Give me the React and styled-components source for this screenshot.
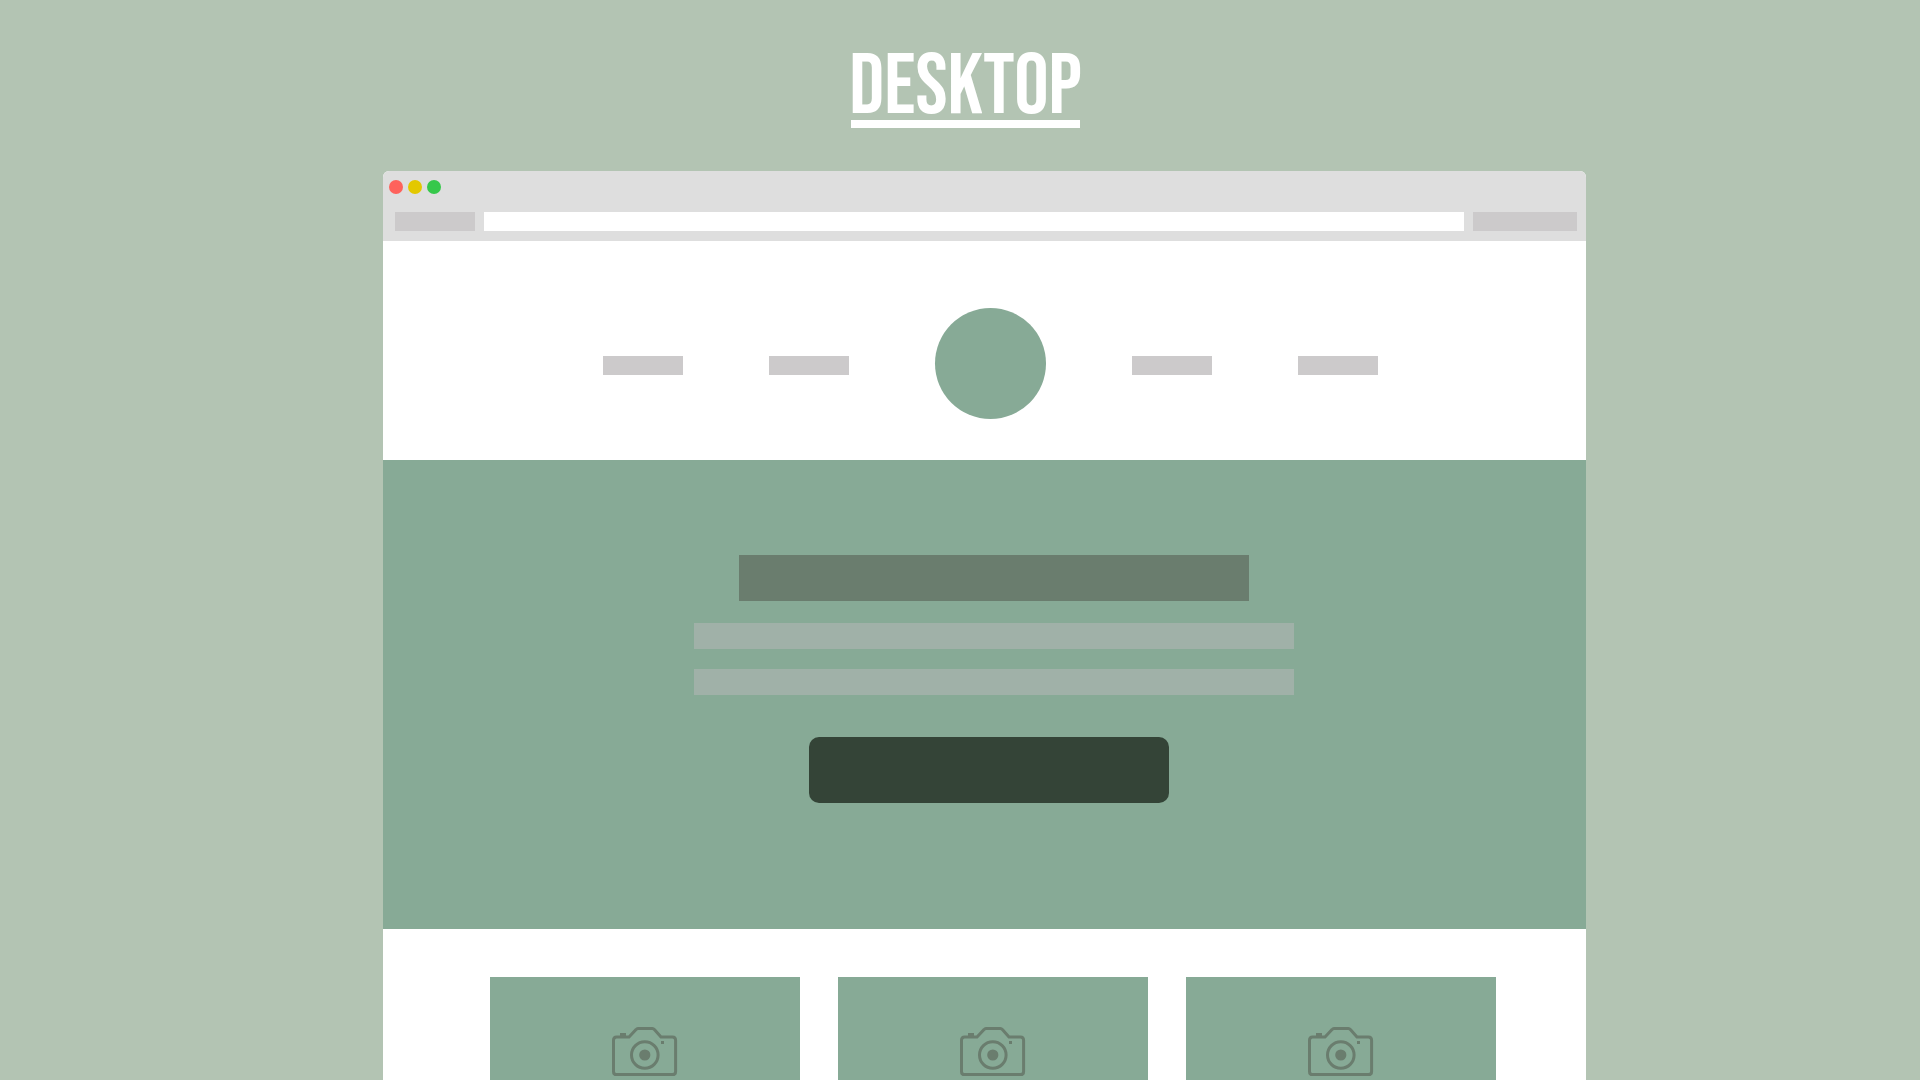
import React from "react";
import styled, { createGlobalStyle, ThemeProvider } from "styled-components";

const theme = {
  backdrop: "#b3c4b3",
  chrome: "#dedede",
  block: "#cccacb",
  sage: "#87aa96",
  moss: "#6a7d6e",
  mist: "#a0b1a8",
  forest: "#344437",
};

const GlobalStyle = createGlobalStyle`
  *, *::before, *::after { box-sizing: border-box; }
  body {
    margin: 0;
    background: ${theme.backdrop};
    font-family: "Bebas Neue", "Oswald", sans-serif;
  }
`;

const Page = styled.div`
  min-height: 100vh;
  display: flex;
  flex-direction: column;
`;

const PageHeader = styled.header`
  display: flex;
  justify-content: center;
  padding: 56px 0 43px 11px;
`;

const Title = styled.h1`
  margin: 0;
  color: #fff;
  font-size: 86px;
  font-weight: 400;
  line-height: 64px;

  &::after {
    content: "";
    display: block;
    height: 8px;
    margin: 0 2px;
    background: #fff;
  }
`;

const BrowserWindow = styled.section`
  flex: 1;
  display: flex;
  flex-direction: column;
  margin: 0 334px 0 383px;
  overflow: hidden;
  background: #fff;
  border-radius: 6px 6px 0 0;
`;

const Chrome = styled.div`
  display: flex;
  flex-direction: column;
  gap: 18px;
  padding-bottom: 10px;
  background: ${(p) => p.theme.chrome};
`;

const WindowControls = styled.div`
  display: flex;
  gap: 5px;
  padding: 9px 6px 0;
`;

const Dot = styled.button`
  width: 14px;
  height: 14px;
  padding: 0;
  border: 0;
  border-radius: 50%;
  background: ${(p) => p.$color};
`;

const Toolbar = styled.div`
  display: flex;
  gap: 9px;
  padding: 0 9px 0 12px;
`;

const ToolGroup = styled.div`
  width: ${(p) => p.$width};
  height: 19px;
  background: ${(p) => p.theme.block};
`;

const Address = styled.input`
  flex: 1;
  min-width: 0;
  height: 19px;
  padding: 0 8px;
  border: 0;
  background: #fff;
`;

const SiteNav = styled.nav`
  display: flex;
  justify-content: center;
  align-items: center;
  gap: 86px;
  padding: 67px 0 41px 11px;
`;

const NavGroup = styled.div`
  display: flex;
  gap: 86px;
  padding-top: 4px;
`;

const NavLink = styled.a`
  display: block;
  width: 80px;
  height: 19px;
  background: ${(p) => p.theme.block};
`;

const Logo = styled.a`
  display: block;
  width: 111px;
  height: 111px;
  border-radius: 50%;
  background: ${(p) => p.theme.sage};
`;

const Hero = styled.section`
  display: flex;
  flex-direction: column;
  align-items: center;
  gap: 42px;
  padding: 95px 0 126px 9px;
  background: ${(p) => p.theme.sage};
`;

const Copy = styled.div`
  display: flex;
  flex-direction: column;
  align-items: center;
  gap: 22px;
  padding-left: 9px;
`;

const Headline = styled.div`
  width: 510px;
  height: 46px;
  background: ${(p) => p.theme.moss};
`;

const Lines = styled.div`
  display: flex;
  flex-direction: column;
  gap: 20px;
`;

const Line = styled.div`
  width: 600px;
  height: 26px;
  background: ${(p) => p.theme.mist};
`;

const Action = styled.button`
  width: 360px;
  height: 66px;
  padding: 0;
  border: 0;
  border-radius: 10px;
  background: ${(p) => p.theme.forest};
`;

const Gallery = styled.section`
  flex: 1;
  display: grid;
  grid-template-columns: repeat(3, 1fr);
  gap: 38px;
  padding: 48px 90px 0 107px;
`;

const Card = styled.article`
  display: flex;
  justify-content: center;
  align-items: flex-start;
  padding-top: 50px;
  background: ${(p) => p.theme.sage};
`;

const CameraDrawing = styled.svg`
  display: block;
  width: 66px;
  height: 50px;
  fill: none;
  stroke: ${(p) => p.theme.moss};
  stroke-width: 3;

  .solid {
    fill: ${(p) => p.theme.moss};
    stroke: none;
  }
`;

function Camera() {
  return (
    <CameraDrawing viewBox="0 0 66 50" aria-hidden="true">
      <path d="M4.6 10H17L24 2.6Q24.8 1.6 26 1.6H40.4Q41.6 1.6 42.4 2.6L49 10H60.4Q63.6 10 63.6 13.2V44.4Q63.6 47.6 60.4 47.6H4.6Q1.5 47.6 1.5 44.4V13.2Q1.5 10 4.6 10Z" />
      <path className="solid" d="M8 6h6v4h-6zM49 14h3v3h-3z" />
      <circle cx="32.8" cy="28" r="13.3" />
      <circle className="solid" cx="32.8" cy="28" r="5.6" />
    </CameraDrawing>
  );
}

const controls = [
  { name: "Close", color: "#fe625c" },
  { name: "Minimise", color: "#e3c800" },
  { name: "Zoom", color: "#36c84b" },
];

export default function App() {
  return (
    <ThemeProvider theme={theme}>
      <GlobalStyle />
      <Page>
        <PageHeader>
          <Title>DESKTOP</Title>
        </PageHeader>
        <BrowserWindow>
          <Chrome>
            <WindowControls>
              {controls.map((c) => (
                <Dot key={c.name} type="button" aria-label={c.name} $color={c.color} />
              ))}
            </WindowControls>
            <Toolbar>
              <ToolGroup $width="80px" />
              <Address type="text" aria-label="Address" />
              <ToolGroup $width="104px" />
            </Toolbar>
          </Chrome>
          <SiteNav>
            <NavGroup>
              <NavLink href="#first" aria-label="First page" />
              <NavLink href="#second" aria-label="Second page" />
            </NavGroup>
            <Logo href="#home" aria-label="Home" />
            <NavGroup>
              <NavLink href="#third" aria-label="Third page" />
              <NavLink href="#fourth" aria-label="Fourth page" />
            </NavGroup>
          </SiteNav>
          <Hero>
            <Copy>
              <Headline />
              <Lines>
                <Line />
                <Line />
              </Lines>
            </Copy>
            <Action type="button" aria-label="Call to action" />
          </Hero>
          <Gallery>
            <Card><Camera /></Card>
            <Card><Camera /></Card>
            <Card><Camera /></Card>
          </Gallery>
        </BrowserWindow>
      </Page>
    </ThemeProvider>
  );
}
